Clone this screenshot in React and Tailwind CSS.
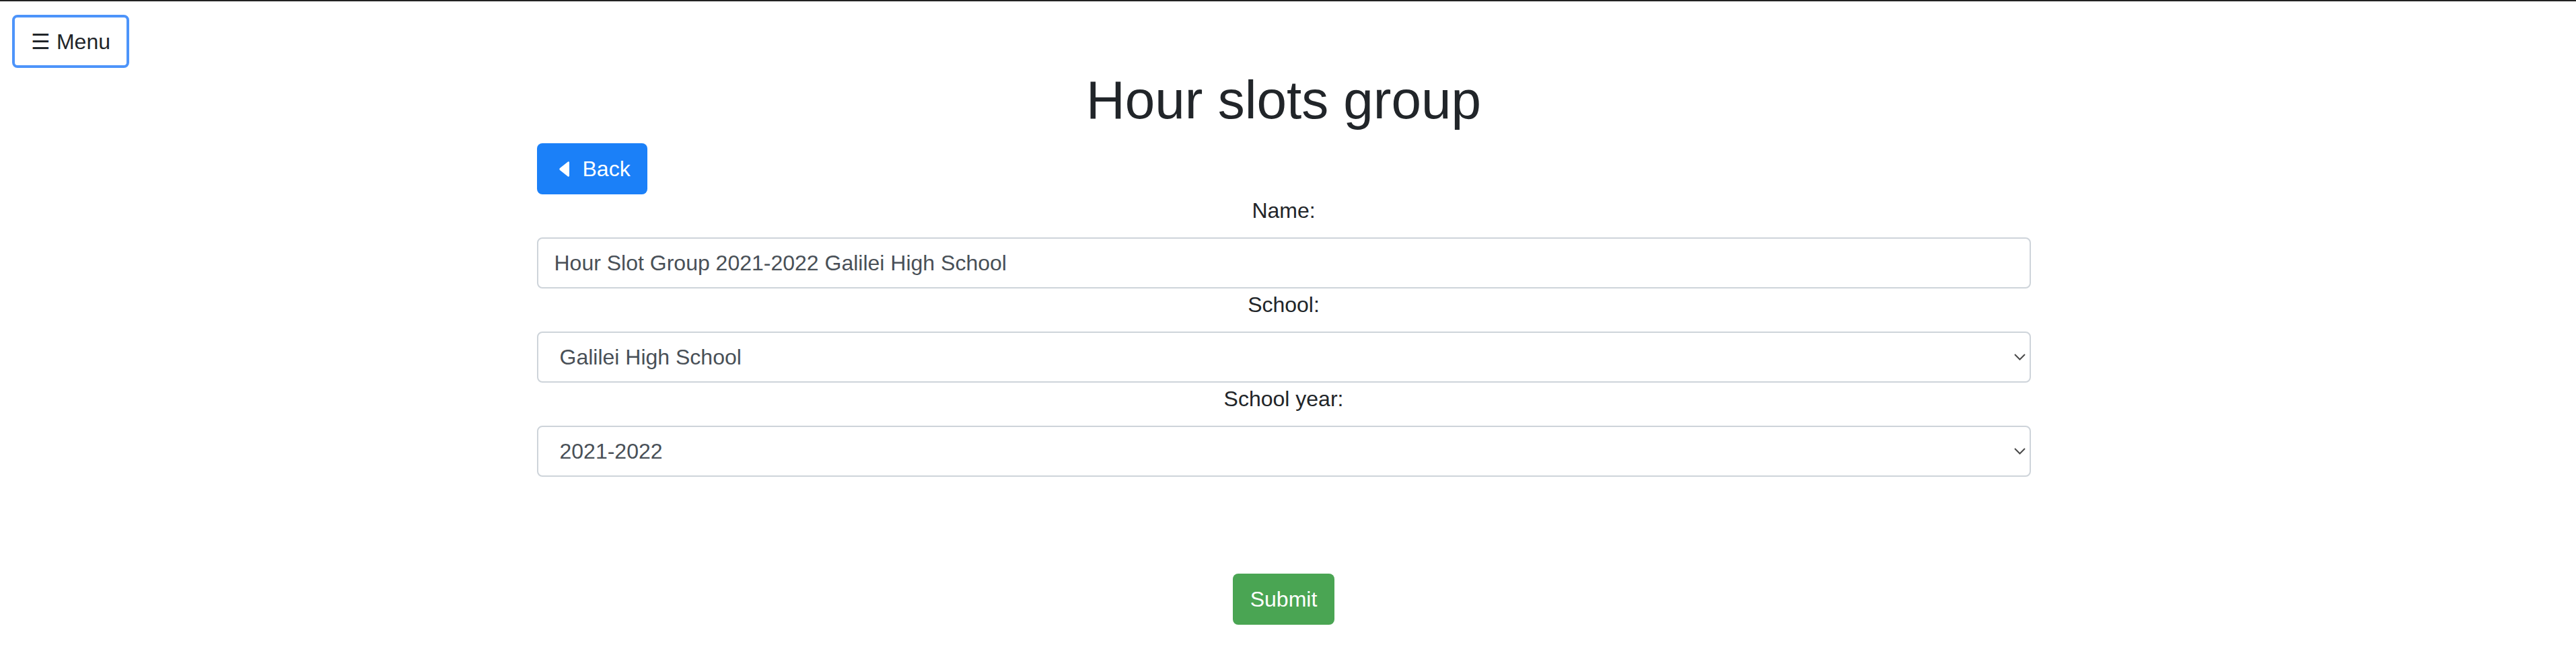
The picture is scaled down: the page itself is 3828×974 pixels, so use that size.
import React from "react";

// Hour slots group edit form (bootstrap-like page rendered at 2x)
function Chevron() {
  return (
    <svg className="h-[10px] w-[17px]" viewBox="0 0 17 10" fill="none" stroke="#4a4a4a" strokeWidth="2">
      <path d="M1 1l7.5 7.5L16 1" />
    </svg>
  );
}

function FakeSelect({ value }) {
  return (
    <div className="flex h-[76px] w-full items-center justify-between rounded-[8px] border-2 border-[#ced4da] bg-white pl-[32px] pr-[6px] text-[32px] text-[#495057]">
      <span>{value}</span>
      <Chevron />
    </div>
  );
}

function Label({ children }) {
  return <label className="mb-[16px] block text-center text-[32px] leading-[48px]">{children}</label>;
}

export default function App() {
  return (
    <div className="min-h-screen border-t-2 border-[#222] bg-white font-['Liberation_Sans',Arial,sans-serif] text-[#212529]">
      <div className="w-[3815px]">
        <div className="pl-[18px] pt-[20px]">
          <button className="flex h-[79px] w-[174px] items-center justify-center rounded-[8px] border-4 border-[#4d94fa] bg-white text-[32px] leading-[48px] text-[#212529]">
            ☰ Menu
          </button>
        </div>
        <h1 className="mb-[16px] text-center text-[80px] font-normal leading-[96px]">Hour slots group</h1>
        <div className="mx-auto w-[2220px]">
          <button className="flex h-[76px] items-center rounded-[8px] bg-[#1b80f8] pl-[33px] pr-[25px] text-[32px] leading-[48px] text-white">
            <svg className="h-[25px] w-[15px]" viewBox="0 0 15 25" fill="white">
              <path d="M13 1.5c1 -0.6 2 0 2 1.2v19.6c0 1.2 -1 1.8 -2 1.2L1 14c-0.9 -0.7 -0.9 -2.3 0 -3z" />
            </svg>
            <span className="ml-[20px]">Back</span>
          </button>
          <Label>Name:</Label>
          <div className="flex h-[76px] w-full items-center rounded-[8px] border-2 border-[#ced4da] bg-white px-[24px] text-[32px] text-[#495057]">
            Hour Slot Group 2021-2022 Galilei High School
          </div>
          <Label>School:</Label>
          <FakeSelect value="Galilei High School" />
          <Label>School year:</Label>
          <FakeSelect value="2021-2022" />
          <div className="mt-[144px] flex justify-center">
            <button className="h-[76px] w-[151px] rounded-[8px] bg-[#4aa553] text-[32px] leading-[48px] text-white">
              Submit
            </button>
          </div>
        </div>
      </div>
    </div>
  );
}
